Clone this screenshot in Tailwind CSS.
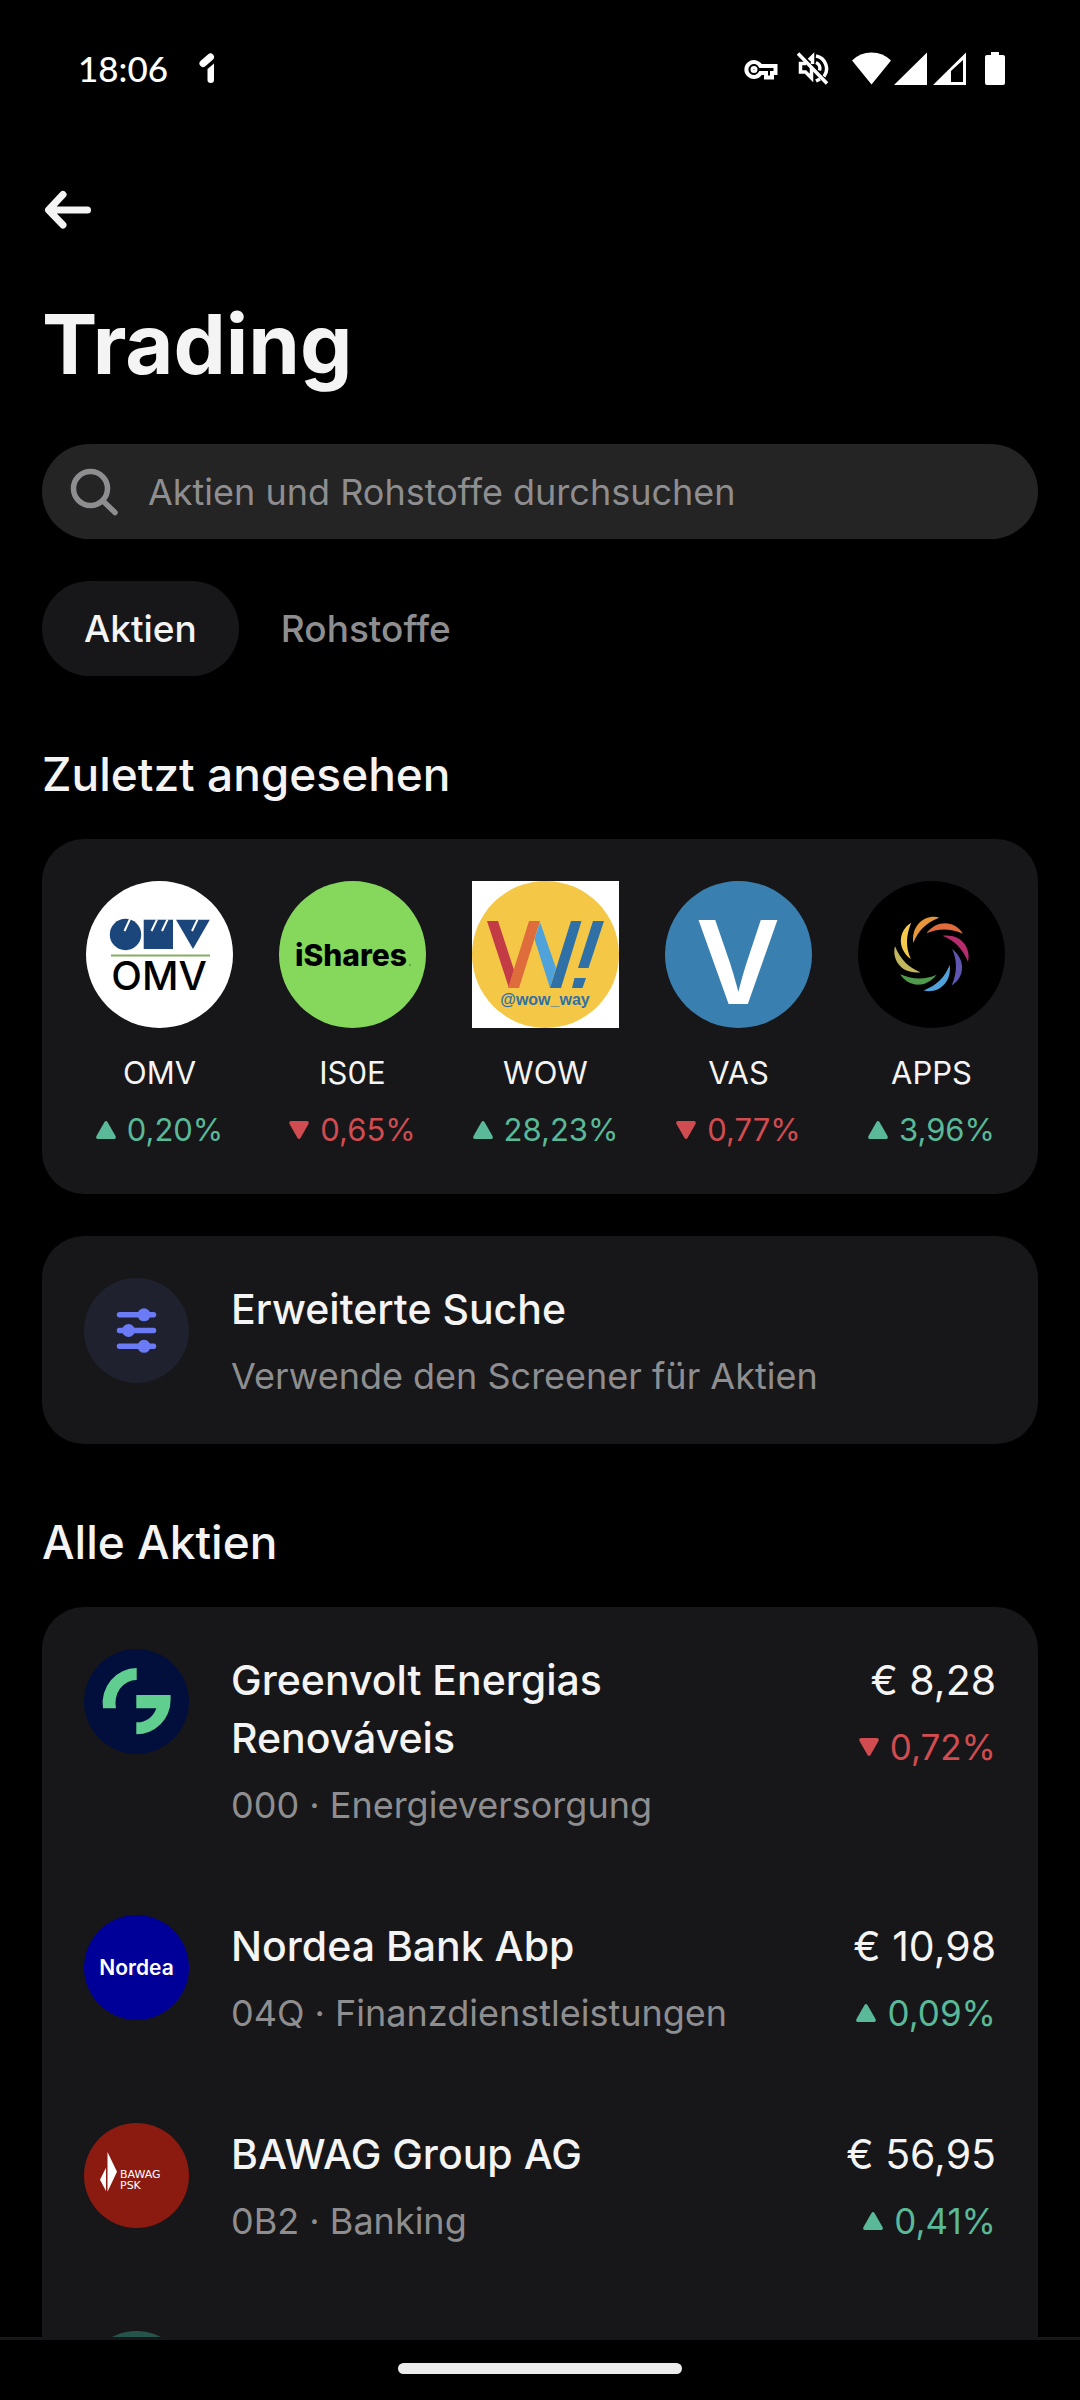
<!DOCTYPE html>
<html lang="de">
<head>
  <meta charset="UTF-8" />
  <meta name="viewport" content="width=device-width, initial-scale=1.0"/>
  <title>Trading</title>
  <script src="https://cdn.jsdelivr.net/npm/@tailwindcss/browser@4"></script>
</head>
<body class="bg-black text-[#f4f4f4] font-['Inter',sans-serif] h-screen flex flex-col overflow-hidden">
  <!-- Status bar -->
  <header class="shrink-0 h-[136px] pl-[78px] pr-[75px] flex items-center justify-between">
    <div class="flex items-center gap-[30px] text-white">
      <span class="font-['Lato',sans-serif] font-medium text-[35px] leading-[44px]">18:06</span>
      <svg class="w-5 h-8" viewBox="0 0 20 32" fill="none" stroke="currentColor" stroke-width="7" stroke-linecap="round">
        <path d="M5 11.500 L12.500 5"/>
        <path fill="currentColor" stroke="none" d="M9.500 17 L16 11.500 V28 Q16 31 12.700 31 Q9.500 31 9.500 28 Z"/>
      </svg>
    </div>
    <div class="flex items-center text-white">
      <!-- VPN key -->
      <svg class="w-[34px] h-[34px] mr-[18px]" viewBox="0 0 34 34" fill="none" stroke="currentColor" stroke-width="4">
        <path d="M16.500 15 A7.500 7.500 0 1 0 16.500 22 H22 V26.500 H28 V22 H31.500 V15 Z"/>
        <circle cx="10" cy="18.500" r="1.500"/>
      </svg>
      <!-- Sound off -->
      <svg class="w-[34px] h-[34px] mr-[22px]" viewBox="0 0 34 34" fill="none" stroke="currentColor" stroke-width="3.500">
        <path d="M2 2.500 L31 32.500"/>
        <path d="M10 12.500 H4.500 V21 H9.500 L15.500 27 V17"/>
        <path d="M13 9 L16.500 5.500 V13"/>
        <path d="M20 5 A13 13 0 0 1 28 25.500"/>
        <path d="M20 11.500 A6.500 6.500 0 0 1 23.500 19.500"/>
        <path d="M20 30 L24 28"/>
      </svg>
      <!-- Wifi -->
      <svg class="w-[39px] h-[34px] mr-[3px]" viewBox="0 0 39 34" fill="currentColor">
        <path d="M19.500 33.500 L0 9.500 Q8 1.500 19.500 1.500 Q31 1.500 39 9.500 Z"/>
      </svg>
      <!-- Signal -->
      <svg class="w-[33px] h-[34px] mr-[6px]" viewBox="0 0 33 34" fill="currentColor">
        <path d="M33 1.500 V34 H0 Z"/>
      </svg>
      <svg class="w-[33px] h-[34px] mr-[19px]" viewBox="0 0 33 34" fill="currentColor" fill-rule="evenodd">
        <path d="M33 1.500 V34 H0 Z M18 20 V31 H30 V9 Z"/>
      </svg>
      <!-- Battery -->
      <svg class="w-5 h-[34px]" viewBox="0 0 20 34" fill="currentColor">
        <path d="M6 1 H14 V4 H18 Q20 4 20 6 V32 Q20 34 18 34 H2 Q0 34 0 32 V6 Q0 4 2 4 H6 Z"/>
      </svg>
    </div>
  </header>

  <main class="flex-1 min-h-0 overflow-hidden px-[42px]">
    <button type="button" aria-label="Zurück" class="block mt-[50px] w-[50px] h-12">
      <svg class="w-[50px] h-12" viewBox="0 0 50 48" fill="none" stroke="currentColor" stroke-width="7" stroke-linecap="round" stroke-linejoin="round">
        <path d="M45.500 24 H8 M21 8.500 L6.500 24 L21 39"/>
      </svg>
    </button>

    <h1 class="mt-[60px] text-[83px] leading-[100px] font-bold">Trading</h1>

    <!-- Search -->
    <label class="mt-[50px] h-[95px] rounded-full bg-[#242424] flex items-center gap-7 px-7 text-[#8e8e90]">
      <svg class="shrink-0 w-[50px] h-[50px]" viewBox="0 0 50 50" fill="none" stroke="currentColor" stroke-width="5.500" stroke-linecap="round">
        <circle cx="20.500" cy="21.500" r="17"/>
        <path d="M33 34 L45 45.500"/>
      </svg>
      <input type="text" aria-label="Suche" placeholder="Aktien und Rohstoffe durchsuchen" class="flex-1 min-w-0 bg-transparent outline-none text-[36px] leading-[52px] placeholder:text-[#8e8e90]"/>
    </label>

    <!-- Tabs -->
    <nav class="mt-[42px] flex">
      <button type="button" class="h-[95px] px-[42px] rounded-full bg-[#171719] text-[37px] font-medium">Aktien</button>
      <button type="button" class="h-[95px] px-[42px] rounded-full text-[37px] font-medium text-[#8e8e90]">Rohstoffe</button>
    </nav>

    <!-- Recently viewed -->
    <section class="pt-[66px]">
      <h2 class="text-[46px] leading-[64px] font-medium">Zuletzt angesehen</h2>
      <div class="mt-[33px] rounded-[42px] bg-[#171719] pt-[42px] pb-[42px] pl-[21px] pr-[10px] grid grid-cols-5 text-[31px] leading-[44px]">
        <a href="#" class="flex flex-col items-center">
          <svg class="w-[147px] h-[147px]" viewBox="0 0 147 147">
            <circle cx="73.500" cy="73.500" r="73.500" fill="#fff"/>
            <g fill="#1b467c">
              <circle cx="39.500" cy="53.500" r="15.700"/>
              <path d="M57.700 38.700 H87 V68 H57.700 Z"/>
              <path d="M90 38.700 H123.800 L107 68 Z"/>
            </g>
            <path stroke="#fff" stroke-width="2" d="M44 38 L38.500 50 M71 38.500 L65.500 50 M81.500 38.500 L76 50 M111.500 38.500 L106 50"/>
            <path stroke="#86ad62" stroke-width="2" d="M25 74.500 H124"/>
            <text x="73" y="109" text-anchor="middle" font-family="Inter" font-size="40" font-weight="500" fill="#000">OMV</text>
          </svg>
          <span class="mt-[23px]">OMV</span>
          <span class="mt-[13px] flex items-center gap-[11px] text-[#59b998]">
            <svg class="w-5 h-[18px]" viewBox="0 0 20 18" fill="currentColor"><path d="M8.500 1 Q10 -1 11.500 1 L19.500 15 Q20.500 18 18 18 H2 Q-.5 18 .5 15 Z"/></svg>
            0,20%
          </span>
        </a>
        <a href="#" class="flex flex-col items-center">
          <svg class="w-[147px] h-[147px]" viewBox="0 0 147 147">
            <circle cx="73.500" cy="73.500" r="73.500" fill="#85d85c"/>
            <text x="72" y="85" text-anchor="middle" font-family="Inter" font-size="30" font-weight="800" fill="#000">iShares</text>
            <circle cx="131" cy="84" r="1" fill="#5a9a3e"/>
          </svg>
          <span class="mt-[23px]">IS0E</span>
          <span class="mt-[13px] flex items-center gap-[11px] text-[#d04c50]">
            <svg class="w-5 h-[18px]" viewBox="0 0 20 18" fill="currentColor"><path d="M8.500 17 Q10 19 11.500 17 L19.500 3 Q20.500 0 18 0 H2 Q-.5 0 .5 3 Z"/></svg>
            0,65%
          </span>
        </a>
        <a href="#" class="flex flex-col items-center">
          <svg class="w-[147px] h-[147px]" viewBox="0 0 147 147">
            <rect width="147" height="147" fill="#fff"/>
            <circle cx="73.500" cy="73.500" r="73.500" fill="#f4c747"/>
            <path fill="#c23b45" d="M15 40 H26 L42 89 L37 107 Z"/>
            <path fill="#df6c3b" d="M57 40 H68 L47 107 H36 Z"/>
            <path fill="#4fa3da" d="M68 41 L84 87 L78 107 L62.500 58 Z"/>
            <path fill="#2f71a6" d="M99 40 H109.500 L89 107 H78 Z M121 40 H132 L116.500 87 H106 Z M102.500 97 H114 L110.500 107 H100 Z"/>
            <text x="73" y="124" text-anchor="middle" font-family="Liberation Sans" font-size="16" font-weight="700" fill="#2f71a6">@wow_way</text>
          </svg>
          <span class="mt-[23px]">WOW</span>
          <span class="mt-[13px] flex items-center gap-[11px] text-[#59b998]">
            <svg class="w-5 h-[18px]" viewBox="0 0 20 18" fill="currentColor"><path d="M8.500 1 Q10 -1 11.500 1 L19.500 15 Q20.500 18 18 18 H2 Q-.5 18 .5 15 Z"/></svg>
            28,23%
          </span>
        </a>
        <a href="#" class="flex flex-col items-center">
          <svg class="w-[147px] h-[147px] overflow-visible" viewBox="0 0 147 147">
            <circle cx="73.500" cy="73.500" r="73.500" fill="#3980b1"/>
            <text x="73" y="123" text-anchor="middle" font-family="Inter" font-size="116" font-weight="600" fill="#fff">V</text>
          </svg>
          <span class="mt-[23px]">VAS</span>
          <span class="mt-[13px] flex items-center gap-[11px] text-[#d04c50]">
            <svg class="w-5 h-[18px]" viewBox="0 0 20 18" fill="currentColor"><path d="M8.500 17 Q10 19 11.500 17 L19.500 3 Q20.500 0 18 0 H2 Q-.5 0 .5 3 Z"/></svg>
            0,77%
          </span>
        </a>
        <a href="#" class="flex flex-col items-center">
          <svg class="w-[147px] h-[147px]" viewBox="0 0 147 147">
            <defs>
              <path id="petal" d="M81.300 36.500 C68 33 53 43 55.300 62 C60 50 68 42 81.300 36.500 Z"/>
            </defs>
            <circle cx="73.500" cy="73.500" r="73.500" fill="#000"/>
            <use href="#petal" fill="#e8963a"/>
            <use href="#petal" fill="#e06c3c" transform="rotate(45 73.500 73)"/>
            <use href="#petal" fill="#b62c6d" transform="rotate(90 73.500 73)"/>
            <use href="#petal" fill="#5e56b0" transform="rotate(135 73.500 73)"/>
            <use href="#petal" fill="#50a2da" transform="rotate(180 73.500 73)"/>
            <use href="#petal" fill="#509a4c" transform="rotate(225 73.500 73)"/>
            <use href="#petal" fill="#c3b75e" transform="rotate(270 73.500 73)"/>
            <use href="#petal" fill="#f4c94c" transform="rotate(315 73.500 73)"/>
          </svg>
          <span class="mt-[23px]">APPS</span>
          <span class="mt-[13px] flex items-center gap-[11px] text-[#59b998]">
            <svg class="w-5 h-[18px]" viewBox="0 0 20 18" fill="currentColor"><path d="M8.500 1 Q10 -1 11.500 1 L19.500 15 Q20.500 18 18 18 H2 Q-.5 18 .5 15 Z"/></svg>
            3,96%
          </span>
        </a>
      </div>
    </section>

    <!-- Screener -->
    <a href="#" class="mt-[42px] rounded-[42px] bg-[#171719] p-[42px] flex gap-[42px]">
      <svg class="shrink-0 w-[105px] h-[105px]" viewBox="0 0 105 105">
        <circle cx="52.500" cy="52.500" r="52.500" fill="#1f212e"/>
        <path d="M35.500 36.800 H69.500 M35.500 52.500 H69.500 M35.500 68.300 H69.500" stroke="#6b7af5" stroke-width="5.500" stroke-linecap="round"/>
        <g fill="#6b7af5">
          <circle cx="60" cy="36.800" r="6.500"/>
          <circle cx="44.500" cy="52.500" r="6.500"/>
          <circle cx="60" cy="68.300" r="6.500"/>
        </g>
      </svg>
      <div class="pt-[2px]">
        <h3 class="text-[41px] leading-[58px] font-medium">Erweiterte Suche</h3>
        <p class="mt-3 text-[36px] leading-[52px] text-[#8e8e90]">Verwende den Screener für Aktien</p>
      </div>
    </a>

    <!-- All stocks -->
    <section class="pt-[66px]">
      <h2 class="text-[46px] leading-[64px] font-medium">Alle Aktien</h2>
      <ul class="mt-[33px] rounded-t-[42px] bg-[#171719]">
        <li class="p-[42px] flex gap-[42px]">
          <svg class="shrink-0 w-[105px] h-[105px]" viewBox="0 0 105 105">
            <circle cx="52.500" cy="52.500" r="52.500" fill="#020f3d"/>
            <g fill="#60ce8e">
              <path d="M52.700 19 A34 35 0 0 0 19 59.300 H32 A21 23 0 0 1 52.700 31 Z"/>
              <path d="M52.300 46 H86.600 V51 A34.300 34.300 0 0 1 52.300 85.300 V73.300 A20 20 0 0 0 72.300 59.300 H52.300 Z"/>
            </g>
          </svg>
          <div class="flex-1 pt-[2px]">
            <h3 class="max-w-[460px] text-[41px] leading-[58px] font-medium">Greenvolt Energias Renováveis</h3>
            <p class="mt-3 text-[36px] leading-[52px] text-[#8e8e90]">000 · Energieversorgung</p>
          </div>
          <div class="pt-[2px] flex flex-col items-end">
            <span class="text-[41px] leading-[58px]">€ 8,28</span>
            <span class="mt-3 flex items-center gap-[11px] text-[35px] leading-[52px] text-[#d04c50]">
              <svg class="w-5 h-[18px]" viewBox="0 0 20 18" fill="currentColor"><path d="M8.500 17 Q10 19 11.500 17 L19.500 3 Q20.500 0 18 0 H2 Q-.5 0 .5 3 Z"/></svg>
              0,72%
            </span>
          </div>
        </li>
        <li class="p-[42px] flex gap-[42px]">
          <svg class="shrink-0 w-[105px] h-[105px]" viewBox="0 0 105 105">
            <circle cx="52.500" cy="52.500" r="52.500" fill="#000099"/>
            <text x="52.500" y="60" text-anchor="middle" font-family="Inter" font-size="21" font-weight="600" fill="#fff">Nordea</text>
          </svg>
          <div class="flex-1 pt-[2px]">
            <h3 class="text-[41px] leading-[58px] font-medium">Nordea Bank Abp</h3>
            <p class="mt-3 text-[36px] leading-[52px] text-[#8e8e90]">04Q · Finanzdienstleistungen</p>
          </div>
          <div class="pt-[2px] flex flex-col items-end">
            <span class="text-[41px] leading-[58px]">€ 10,98</span>
            <span class="mt-3 flex items-center gap-[11px] text-[35px] leading-[52px] text-[#59b998]">
              <svg class="w-5 h-[18px]" viewBox="0 0 20 18" fill="currentColor"><path d="M8.500 1 Q10 -1 11.500 1 L19.500 15 Q20.500 18 18 18 H2 Q-.5 18 .5 15 Z"/></svg>
              0,09%
            </span>
          </div>
        </li>
        <li class="p-[42px] flex gap-[42px]">
          <svg class="shrink-0 w-[105px] h-[105px]" viewBox="0 0 105 105">
            <circle cx="52.500" cy="52.500" r="52.500" fill="#8b1a10"/>
            <path fill="#fff" d="M23.500 29 L33 48.700 L23.500 68.700 Z M22 44.700 L16 56.700 L22 68 Z"/>
            <g font-family="DejaVu Sans" font-size="11" fill="#fff">
              <text x="36" y="55">BAWAG</text>
              <text x="36" y="66">PSK</text>
            </g>
          </svg>
          <div class="flex-1 pt-[2px]">
            <h3 class="text-[41px] leading-[58px] font-medium">BAWAG Group AG</h3>
            <p class="mt-3 text-[36px] leading-[52px] text-[#8e8e90]">0B2 · Banking</p>
          </div>
          <div class="pt-[2px] flex flex-col items-end">
            <span class="text-[41px] leading-[58px]">€ 56,95</span>
            <span class="mt-3 flex items-center gap-[11px] text-[35px] leading-[52px] text-[#59b998]">
              <svg class="w-5 h-[18px]" viewBox="0 0 20 18" fill="currentColor"><path d="M8.500 1 Q10 -1 11.500 1 L19.500 15 Q20.500 18 18 18 H2 Q-.5 18 .5 15 Z"/></svg>
              0,41%
            </span>
          </div>
        </li>
        <li class="p-[42px] flex">
          <span class="w-[105px] h-[105px] rounded-full bg-[#27544a]"></span>
        </li>
      </ul>
    </section>
  </main>

  <!-- Gesture bar -->
  <footer class="shrink-0 h-[63px] border-t-[3px] border-[#171719] flex justify-center pt-[23px]">
    <div class="w-[284px] h-[11px] rounded-full bg-[#ececec]"></div>
  </footer>
</body>
</html>
